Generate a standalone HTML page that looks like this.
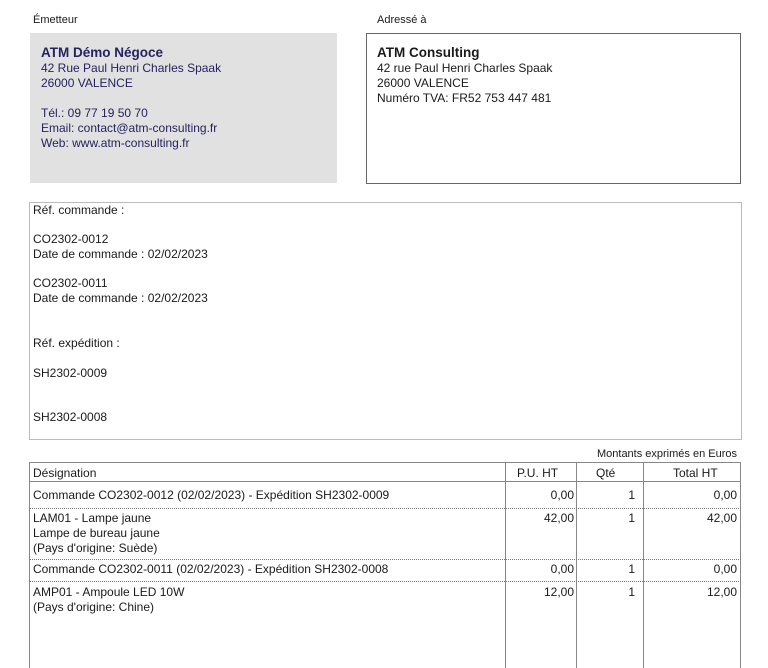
<!DOCTYPE html>
<html><head><meta charset="utf-8"><style>
html,body{margin:0;width:768px;height:668px;overflow:hidden}
body{background:#fff;position:relative;font-family:"Liberation Sans",Arial,sans-serif;color:#1a1a1a}
.a{position:absolute;white-space:nowrap;font-size:12px;line-height:15px}
.n{color:#25235e}
.s{font-size:11px}
.b{font-weight:bold;font-size:13.5px}
.v{position:absolute;top:462px;height:206px;width:1px;background:#888}
.h{position:absolute;left:29px;width:712px;height:0;border-top:1px dotted #777}
.r{text-align:right}
</style></head><body>
<div class="a s" style="left:33px;top:13px">Émetteur</div>
<div class="a s" style="left:377px;top:13px">Adressé à</div>
<div style="position:absolute;left:30px;top:33px;width:307px;height:150px;background:#e1e1e1"></div>
<div style="position:absolute;left:366px;top:33px;width:373px;height:149px;border:1px solid #666"></div>
<div class="a n b" style="left:41px;top:45px">ATM Démo Négoce</div>
<div class="a n" style="left:41px;top:61px">42 Rue Paul Henri Charles Spaak<br>26000 VALENCE<br><br>Tél.: 09 77 19 50 70<br>Email: contact@atm-consulting.fr<br>Web: www.atm-consulting.fr</div>
<div class="a b" style="left:377px;top:45px">ATM Consulting</div>
<div class="a" style="left:377px;top:61px">42 rue Paul Henri Charles Spaak<br>26000 VALENCE<br>Numéro TVA: FR52 753 447 481</div>
<div style="position:absolute;left:29px;top:202px;width:711px;height:236px;border:1px solid #bbb"></div>
<div class="a" style="left:33px;top:203px">Réf. commande :</div>
<div class="a" style="left:33px;top:232px">CO2302-0012<br>Date de commande : 02/02/2023</div>
<div class="a" style="left:33px;top:276px">CO2302-0011<br>Date de commande : 02/02/2023</div>
<div class="a" style="left:33px;top:336px">Réf. expédition :</div>
<div class="a" style="left:33px;top:366px">SH2302-0009</div>
<div class="a" style="left:33px;top:410px">SH2302-0008</div>
<div class="a s" style="right:31px;top:447px">Montants exprimés en Euros</div>
<div style="position:absolute;left:29px;top:462px;width:710px;height:205px;border:1px solid #888;border-bottom:none"></div>
<div class="v" style="left:505px"></div><div class="v" style="left:576px"></div><div class="v" style="left:643px"></div>
<div style="position:absolute;left:29px;top:481px;width:712px;height:1px;background:#888"></div>
<div class="h" style="top:508px"></div><div class="h" style="top:559px"></div><div class="h" style="top:581px"></div>
<div class="a" style="left:33px;top:466px">Désignation</div>
<div class="a" style="left:517px;top:466px">P.U. HT</div>
<div class="a" style="left:596px;top:466px">Qté</div>
<div class="a" style="left:673px;top:466px">Total HT</div>
<div class="a" style="left:33px;top:488px">Commande CO2302-0012 (02/02/2023) - Expédition SH2302-0009</div>
<div class="a" style="left:33px;top:511px">LAM01 - Lampe jaune<br>Lampe de bureau jaune<br>(Pays d'origine: Suède)</div>
<div class="a" style="left:33px;top:562px">Commande CO2302-0011 (02/02/2023) - Expédition SH2302-0008</div>
<div class="a" style="left:33px;top:585px">AMP01 - Ampoule LED 10W<br>(Pays d'origine: Chine)</div>
<div class="a r" style="right:194px;top:488px">0,00</div><div class="a r" style="right:133px;top:488px">1</div><div class="a r" style="right:31px;top:488px">0,00</div>
<div class="a r" style="right:194px;top:511px">42,00</div><div class="a r" style="right:133px;top:511px">1</div><div class="a r" style="right:31px;top:511px">42,00</div>
<div class="a r" style="right:194px;top:562px">0,00</div><div class="a r" style="right:133px;top:562px">1</div><div class="a r" style="right:31px;top:562px">0,00</div>
<div class="a r" style="right:194px;top:585px">12,00</div><div class="a r" style="right:133px;top:585px">1</div><div class="a r" style="right:31px;top:585px">12,00</div>
</body></html>
